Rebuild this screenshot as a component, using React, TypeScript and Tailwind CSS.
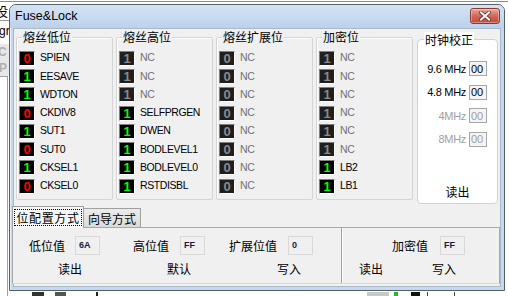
import React from "react";

const LATIN = "font-['Liberation_Sans','Arial',sans-serif]";
const CJK = "font-['Noto_Sans_CJK_SC','Noto_Sans',sans-serif]";

type Fuse = { v: "0" | "1"; label: string; dis?: boolean };

const LOW: Fuse[] = [
  { v: "0", label: "SPIEN" },
  { v: "1", label: "EESAVE" },
  { v: "1", label: "WDTON" },
  { v: "0", label: "CKDIV8" },
  { v: "1", label: "SUT1" },
  { v: "0", label: "SUT0" },
  { v: "1", label: "CKSEL1" },
  { v: "0", label: "CKSEL0" },
];

const HIGH: Fuse[] = [
  { v: "1", label: "NC", dis: true },
  { v: "1", label: "NC", dis: true },
  { v: "1", label: "NC", dis: true },
  { v: "1", label: "SELFPRGEN" },
  { v: "1", label: "DWEN" },
  { v: "1", label: "BODLEVEL1" },
  { v: "1", label: "BODLEVEL0" },
  { v: "1", label: "RSTDISBL" },
];

const EXT: Fuse[] = Array.from({ length: 8 }, () => ({ v: "0", label: "NC", dis: true }) as Fuse);

const LOCK: Fuse[] = [
  { v: "1", label: "NC", dis: true },
  { v: "1", label: "NC", dis: true },
  { v: "1", label: "NC", dis: true },
  { v: "1", label: "NC", dis: true },
  { v: "1", label: "NC", dis: true },
  { v: "1", label: "NC", dis: true },
  { v: "1", label: "LB2" },
  { v: "1", label: "LB1" },
];

function Bit({ v, dis }: { v: string; dis?: boolean }) {
  const color = dis ? "text-[#8a8a8a]" : v === "1" ? "text-[#00ff00]" : "text-[#ff0000]";
  return (
    <span
      className={`flex h-[15px] w-[16px] shrink-0 items-center justify-center border border-t-[#808080] border-l-[#808080] border-r-white border-b-white ${
        dis ? "bg-[#1f1f1f]" : "bg-black"
      } ${color} ${LATIN} text-[13px] font-bold leading-none`}
    >
      {v}
    </span>
  );
}

function FuseGroup({ title, items }: { title: string; items: Fuse[] }) {
  return (
    <div className="relative h-[163px] w-[97px] shrink-0 rounded-[2px] border border-[#d5d5d5] pl-[2px] pt-[11px] shadow-[inset_1px_1px_0_#fff]">
      <span className={`absolute -top-[9px] left-[5px] bg-[#f0f0f0] px-[1px] text-[12px] leading-[16px] text-black ${CJK}`}>
        {title}
      </span>
      {items.map((f, i) => (
        <div key={i} className="flex h-[18.3px] items-center gap-[5px] overflow-hidden">
          <Bit v={f.v} dis={f.dis} />
          <span
            className={`whitespace-nowrap text-[10.5px] tracking-[-0.4px] ${LATIN} ${
              f.dis ? "text-[#727272]" : "text-black"
            }`}
          >
            {f.label}
          </span>
        </div>
      ))}
    </div>
  );
}

function ClockRow({ label, dis }: { label: string; dis?: boolean }) {
  return (
    <div className="flex h-[23.5px] items-center justify-end gap-[3px] pr-[10px]">
      <span className={`text-[11px] tracking-[-0.3px] ${LATIN} ${dis ? "text-[#a0a0a0]" : "text-black"}`}>{label}</span>
      <span
        className={`flex h-[15px] w-[18px] items-center border border-[#a6a6a6] bg-[#f4f4f4] pl-[1px] text-[11px] ${LATIN} ${
          dis ? "text-[#a0a0a0]" : "text-black"
        }`}
      >
        00
      </span>
    </div>
  );
}

function ValueBox({ value, w = "w-[25px]" }: { value: string; w?: string }) {
  return (
    <span
      className={`flex h-[19px] ${w} items-center border border-[#d9d9d9] bg-[#f0f0f0] pl-[3px] text-[9px] font-bold text-[#1a1a40] ${LATIN}`}
    >
      {value}
    </span>
  );
}

function CloseButton() {
  return (
    <div className="flex h-[16px] w-[30px] items-center justify-center rounded-[3px] border border-[#8b3a33] bg-gradient-to-b from-[#e9a99c] via-[#d0675a] to-[#c44a3c] shadow-[inset_0_0_0_1px_rgba(255,255,255,0.35)]">
      <svg width="12" height="10" viewBox="0 0 12 10">
        <path d="M2 1.5 L10 8.5 M10 1.5 L2 8.5" stroke="#6b2a25" strokeWidth="3.6" strokeLinecap="square" />
        <path d="M2 1.5 L10 8.5 M10 1.5 L2 8.5" stroke="#ffffff" strokeWidth="2" strokeLinecap="square" />
      </svg>
    </div>
  );
}

export default function App() {
  return (
    <div className="relative h-[296px] w-[508px] overflow-hidden bg-white">
      {/* background windows peeking out */}
      <div className="absolute left-0 top-[1px] h-px w-full bg-[#8a8a8a]" />
      <span className={`absolute -left-[5px] top-[3px] text-[13px] leading-[15px] text-black ${CJK}`}>设</span>
      <div className="absolute left-0 top-[20px] h-px w-[9px] bg-[#9a9a9a]" />
      <span className={`absolute -left-[1px] top-[24px] text-[12px] leading-[14px] text-black ${LATIN}`}>gr</span>
      <div className="absolute left-0 top-[44px] h-[32px] w-[9px] bg-[#e8e8e8]" />
      <span className={`absolute -left-[2px] top-[45px] text-[12px] font-bold leading-[14px] text-[#b0b0b0] ${LATIN}`}>C</span>
      <span className={`absolute -left-[1px] top-[61px] text-[12px] font-bold leading-[14px] text-[#b0b0b0] ${LATIN}`}>P</span>
      <div className="absolute left-[7px] top-[76px] h-[220px] w-px bg-[#a0a0a0]" />
      <div className="absolute left-0 top-[76px] h-px w-[8px] bg-[#a0a0a0]" />
      <div className="absolute left-[32px] top-[292px] h-[4px] w-[12px] bg-[#333]" />
      <div className="absolute left-[55px] top-[292px] h-[4px] w-[11px] bg-[#555]" />
      <div className="absolute left-[96px] top-[292px] h-[4px] w-[2px] bg-[#222]" />
      <div className="absolute left-[367px] top-[292px] h-[4px] w-[22px] bg-[#c8c8c8]" />
      <div className="absolute left-[394px] top-[292px] h-[4px] w-[4px] bg-[#1fbf1f]" />
      <div className="absolute left-[411px] top-[292px] h-[4px] w-[9px] bg-[#111]" />
      <div className="absolute left-[427px] top-[292px] h-[4px] w-px bg-[#444]" />
      <div className="absolute left-[454px] top-[292px] h-[4px] w-px bg-[#444]" />

      {/* dialog window */}
      <div className="absolute left-[9px] top-[4px] flex h-[287px] w-[496px] flex-col rounded-t-[7px] border border-[#56606b] bg-[#c6d8ec] shadow-[inset_1px_1px_0_rgba(255,255,255,0.6)]">
        {/* title bar */}
        <div className="flex h-[23px] items-start justify-between bg-gradient-to-b from-[#d3e3f4] to-[#bcd2ea] pl-[5px] pr-[4px] pt-[3px] rounded-t-[6px]">
          <span className={`mt-[1px] text-[12.5px] leading-[15px] text-black ${LATIN}`}>Fuse&amp;Lock</span>
          <CloseButton />
        </div>

        {/* client area */}
        <div className="mx-[3px] mb-[3px] flex flex-1 flex-col border border-[#a9b9ca] bg-[#f0f0f0]">
          {/* fuse groups */}
          <div className="flex pl-[2px] pt-[8px]">
            <div className="flex gap-[3px]">
              <FuseGroup title="熔丝低位" items={LOW} />
              <FuseGroup title="熔丝高位" items={HIGH} />
              <FuseGroup title="熔丝扩展位" items={EXT} />
              <FuseGroup title="加密位" items={LOCK} />
            </div>
            <div className="relative ml-[4px] mt-[2px] flex h-[165px] w-[81px] flex-col rounded-[4px] border border-[#c9d3dc] bg-white pt-[17px]">
              <span className={`absolute -top-[8px] left-[6px] bg-white px-[1px] text-[12px] leading-[16px] text-black ${CJK}`}>
                时钟校正
              </span>
              <ClockRow label="9.6 MHz" />
              <ClockRow label="4.8 MHz" />
              <ClockRow label="4MHz" dis />
              <ClockRow label="8MHz" dis />
              <div className={`mt-auto mb-[3px] text-center text-[12px] leading-[16px] text-black ${CJK}`}>读出</div>
            </div>
          </div>

          {/* tabs */}
          <div className="-ml-[2px] mt-[2px] flex h-[21px] items-end">
            <div className="relative z-10 -mb-px flex h-[22px] w-[72px] items-center justify-center border border-b-0 border-[#a0a0a0] bg-[#f7f7f7]">
              <span className={`border border-dotted border-black px-[1px] text-[12px] leading-[15px] tracking-[0.6px] text-black ${CJK}`}>
                位配置方式
              </span>
            </div>
            <div className="flex h-[19px] w-[57px] items-center justify-center border border-b-0 border-l-0 border-[#a0a0a0] bg-gradient-to-b from-[#ececec] to-[#dadada]">
              <span className={`text-[12px] leading-[15px] text-black ${CJK}`}>向导方式</span>
            </div>
          </div>

          {/* tab panel */}
          <div className={`-ml-[2px] flex h-[57px] border border-[#a8a8a8] border-b-[#d8d8d8] bg-[#f0f0f0] text-[12px] text-black ${CJK}`}>
            <div className="flex w-[329px] flex-col border-r border-r-[#a0a0a0] shadow-[1px_0_0_#fff]">
              <div className="flex h-[29px] items-center pt-[6px]">
                <span className="ml-[16px]">低位值</span>
                <span className="ml-[10px]"><ValueBox value="6A" /></span>
                <span className="ml-[33px]">高位值</span>
                <span className="ml-[11px]"><ValueBox value="FF" /></span>
                <span className="ml-[24px]">扩展位值</span>
                <span className="ml-[11px]"><ValueBox value="0" /></span>
              </div>
              <div className="flex h-[24px] items-center">
                <span className="ml-[45px]">读出</span>
                <span className="ml-[85px]">默认</span>
                <span className="ml-[86px]">写入</span>
              </div>
            </div>
            <div className="flex flex-1 flex-col">
              <div className="flex h-[29px] items-center pt-[6px]">
                <span className="ml-[50px]">加密值</span>
                <span className="ml-[12px]"><ValueBox value="FF" /></span>
              </div>
              <div className="flex h-[24px] items-center">
                <span className="ml-[17px]">读出</span>
                <span className="ml-[49px]">写入</span>
              </div>
            </div>
          </div>
        </div>
      </div>
    </div>
  );
}
